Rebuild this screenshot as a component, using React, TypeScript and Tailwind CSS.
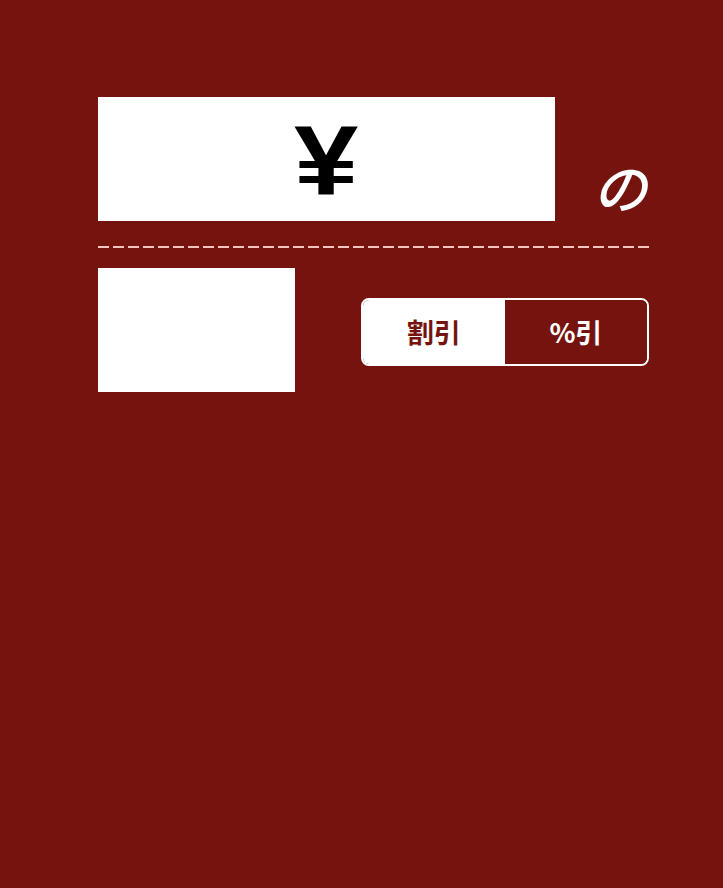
import React, { useState } from 'react';

const jp = { fontFamily: '"Noto Sans CJK JP", "Noto Sans", sans-serif' };

export default function App() {
  const [mode, setMode] = useState<'yen' | 'pct'>('yen');

  return (
    <div className="min-h-[888px] w-full bg-[#75140f] pt-[97px] pl-[98px]">
      <div className="w-[553px]">
        {/* Price row */}
        <div className="flex items-end h-[124px]">
          <div className="w-[457px] h-[124px] bg-white flex items-center justify-center">
            <span
              className="text-[98px] leading-none font-black text-black scale-x-[1.18] inline-block translate-y-[1px]"
              style={{ fontFamily: '"Liberation Sans", Arial, sans-serif' }}
            >
              ¥
            </span>
          </div>
          <div className="flex-1 flex justify-end pr-[4px] pb-[8px]">
            <span className="text-[54px] leading-none font-medium italic text-white" style={jp}>
              の
            </span>
          </div>
        </div>

        {/* Divider */}
        <div className="mt-[25px] h-[2px] w-[555px] bg-[repeating-linear-gradient(90deg,#f3c4bc_0px,#f3c4bc_11px,transparent_11px,transparent_15px)]" />

        {/* Discount row */}
        <div className="mt-[20px] flex items-center">
          <div className="w-[197px] h-[124px] bg-white" />
          <div className="ml-[66px] mt-[4px] flex w-[288px] h-[68px] rounded-[8px] border-2 border-white overflow-hidden">
            <button
              onClick={() => setMode('yen')}
              className={`flex-1 flex items-center justify-center text-[27px] font-bold ${
                mode === 'yen' ? 'bg-white text-[#75140f]' : 'bg-[#75140f] text-white'
              }`}
              style={jp}
            >
              割引
            </button>
            <button
              onClick={() => setMode('pct')}
              className={`flex-1 flex items-center justify-center text-[27px] font-bold ${
                mode === 'pct' ? 'bg-white text-[#75140f]' : 'bg-[#75140f] text-white'
              }`}
              style={jp}
            >
              %引
            </button>
          </div>
        </div>
      </div>
    </div>
  );
}
